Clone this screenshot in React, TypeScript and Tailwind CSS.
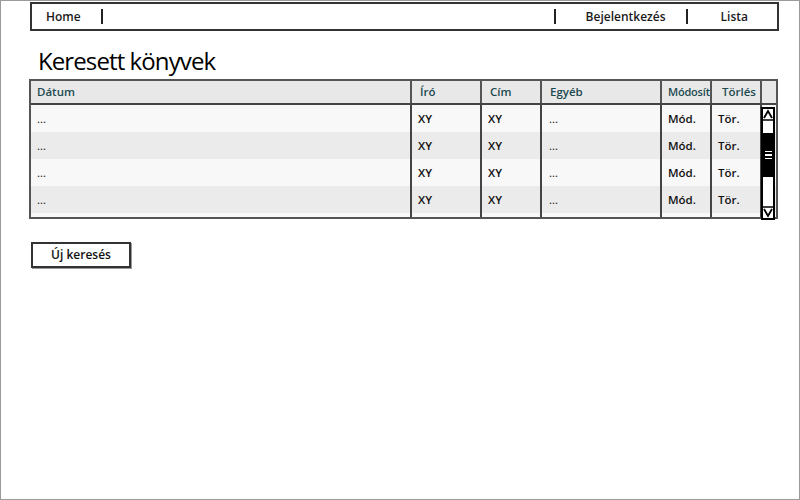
import React from 'react';

const font = { fontFamily: '"Open Sans", "DejaVu Sans", sans-serif' };

const cols = [
  { label: 'Dátum', w: 'w-[381px]', pad: 'pl-[6px]' },
  { label: 'Író', w: 'w-[70px]', pad: 'pl-[8px]' },
  { label: 'Cím', w: 'w-[60px]', pad: 'pl-[8px]' },
  { label: 'Egyéb', w: 'w-[120px]', pad: 'pl-[8px]' },
  { label: 'Módosít', w: 'w-[50px]', pad: 'pl-[6px] text-[11px] tracking-[-0.2px]' },
  { label: 'Törlés', w: 'w-[50px]', pad: 'pl-[10px]' },
];

const rows = [0, 1, 2, 3];

function Sep() {
  return <div className="h-[15px] w-[2px] bg-[#222]" />;
}

function ScrollBar() {
  return (
    <div className="absolute right-[1px] top-[26px] flex h-[113px] w-[14px] flex-col border-2 border-black bg-white">
      <svg width="10" height="12" viewBox="0 0 10 12" className="shrink-0">
        <path d="M1 9 L5 2 L9 9" fill="none" stroke="#000" strokeWidth="1.8" />
        <line x1="0" y1="11" x2="10" y2="11" stroke="#000" strokeWidth="1.5" />
      </svg>
      <div className="h-[12px]" />
      <div className="flex h-[44px] flex-col items-center justify-center gap-[2px] bg-black">
        <div className="h-[1.5px] w-[7px] bg-white" />
        <div className="h-[1.5px] w-[7px] bg-white" />
        <div className="h-[1.5px] w-[7px] bg-white" />
      </div>
      <div className="flex-1" />
      <svg width="10" height="12" viewBox="0 0 10 12" className="shrink-0">
        <line x1="0" y1="1" x2="10" y2="1" stroke="#000" strokeWidth="1.5" />
        <path d="M1 3 L5 10 L9 3" fill="none" stroke="#000" strokeWidth="1.8" />
      </svg>
    </div>
  );
}

export default function App() {
  return (
    <div className="h-[500px] w-[800px] border border-[#9a9a9a] bg-white text-[#111]" style={font}>
      <nav className="ml-[29px] mt-[1px] flex h-[29px] w-[749px] items-center border-2 border-[#333] text-[12px] font-semibold text-[#1a1a1a]">
        <span className="ml-[14px]">Home</span>
        <div className="ml-[20px]"><Sep /></div>
        <div className="ml-auto"><Sep /></div>
        <span className="ml-[30px]">Bejelentkezés</span>
        <div className="ml-[20px]"><Sep /></div>
        <span className="ml-[33px] mr-[29px]">Lista</span>
      </nav>

      <h1 className="ml-[37px] mt-[14px] text-[24px] font-medium leading-[32px] tracking-[-0.9px] text-black">
        Keresett könyvek
      </h1>

      <div className="relative ml-[28px] mt-[2px] w-[749px] border-2 border-[#555] bg-white">
        <div className="flex h-[24px] border-b-2 border-[#444] bg-[#e8e8e8] text-[11.5px] font-semibold text-[#1d4a50]">
          {cols.map((c) => (
            <div key={c.label} className={`${c.w} ${c.pad} flex items-center overflow-hidden whitespace-nowrap border-r-2 border-[#555]`}>
              {c.label}
            </div>
          ))}
          <div className="flex-1" />
        </div>
        {rows.map((r) => (
          <div
            key={r}
            className={`flex h-[27px] text-[11.5px] font-semibold ${r % 2 === 0 ? 'bg-[#f8f8f8]' : 'bg-[#ebebeb]'}`}
          >
            <div className="flex w-[381px] items-center border-r-2 border-[#444] pl-[6px] font-normal">...</div>
            <div className="flex w-[70px] items-center border-r-2 border-[#444] pl-[6px]">XY</div>
            <div className="flex w-[60px] items-center border-r-2 border-[#444] pl-[6px]">XY</div>
            <div className="flex w-[120px] items-center border-r-2 border-[#444] pl-[7px] font-normal">...</div>
            <div className="flex w-[50px] items-center border-r-2 border-[#444] pl-[6px]">Mód.</div>
            <div className="flex w-[50px] items-center border-r-2 border-[#444] pl-[6px]">Tör.</div>
            <div className="flex-1" />
          </div>
        ))}
        <div className="flex h-[4px] bg-[#f8f8f8]">
          <div className="w-[381px] border-r-2 border-[#444]" />
          <div className="w-[70px] border-r-2 border-[#444]" />
          <div className="w-[60px] border-r-2 border-[#444]" />
          <div className="w-[120px] border-r-2 border-[#444]" />
          <div className="w-[50px] border-r-2 border-[#444]" />
          <div className="w-[50px] border-r-2 border-[#444]" />
        </div>
        <ScrollBar />
      </div>

      <button className="ml-[30px] mt-[23px] flex h-[26px] w-[100px] items-center justify-center border-2 border-[#333] bg-white text-[12px] font-semibold shadow-[1px_1px_0_#999]">
        Új keresés
      </button>
    </div>
  );
}
